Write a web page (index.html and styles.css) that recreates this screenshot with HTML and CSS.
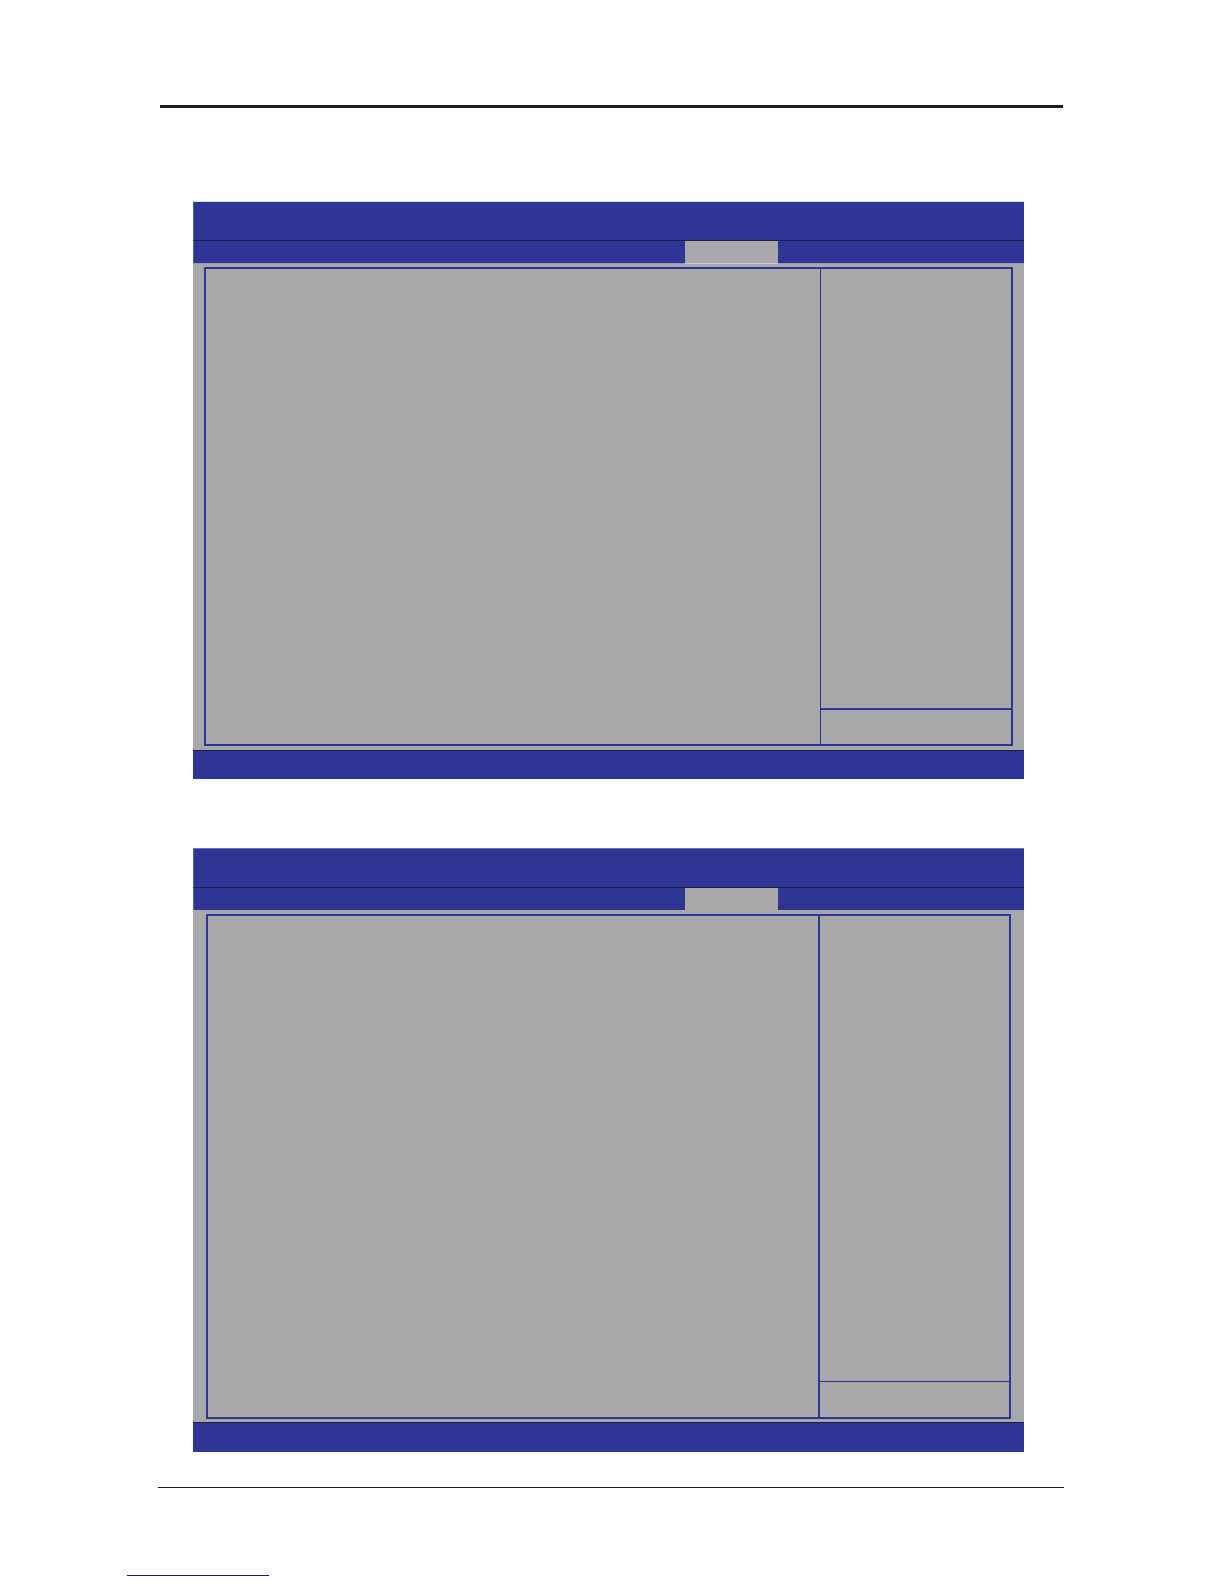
FILE: index.html
```html
<!DOCTYPE html>
<html lang="en">
<head>
    <meta charset="UTF-8">
    <meta name="viewport" content="width=device-width, initial-scale=1.0">
    <title>BIOS Setup</title>
    <link rel="stylesheet" href="styles.css">
</head>
<body>
    <div class="page">
        <header class="page-header"></header>

        <main>
            <section class="screen screen-first">
                <div class="title-bar"></div>
                <div class="menu-bar">
                    <div class="tab-active"></div>
                </div>
                <div class="content">
                    <div class="panel">
                        <div class="settings"></div>
                        <div class="side">
                            <div class="help"></div>
                            <div class="keys"></div>
                        </div>
                    </div>
                </div>
                <div class="bottom-bar"></div>
            </section>

            <section class="screen screen-second">
                <div class="title-bar"></div>
                <div class="menu-bar">
                    <div class="tab-active"></div>
                </div>
                <div class="content">
                    <div class="panel">
                        <div class="settings"></div>
                        <div class="side">
                            <div class="help"></div>
                            <div class="keys"></div>
                        </div>
                    </div>
                </div>
                <div class="bottom-bar"></div>
            </section>
        </main>

        <footer class="page-footer"></footer>
    </div>
    <div class="bottom-line"></div>
</body>
</html>
```
FILE: styles.css
```css
* {
    box-sizing: border-box;
}
body {
    margin: 0;
    background: #fff;
    font-family: "Liberation Sans", Arial, sans-serif;
}
.page {
    padding: 105px 160px 0 158px;
}
.page-header {
    margin: 0 1px 0 2px;
    border-top: 3px solid #1c1c1c;
}
main {
    display: flex;
    flex-direction: column;
    gap: 69px;
    margin: 93px 40px 0 35px;
}

/* setup screen */
.screen {
    background: #a8a8aa;
}
.title-bar {
    height: 40px;
    background: #2e3594;
    border-top: 1px solid #6e71c4;
    border-left: 1px solid #5a5fb0;
    border-bottom: 1px solid #1d1d3c;
}
.menu-bar {
    display: flex;
    height: 22px;
    padding-left: 491px;
    background: #2e3594;
    border-left: 1px solid #5a5fb0;
}
.tab-active {
    width: 93px;
    background: #a8a8aa;
}
.content {
    padding: 4px 13px 3px;
}
.panel {
    display: flex;
    border: 2px solid #2e3594;
}
.settings {
    flex: 1;
}
.side {
    display: flex;
    flex-direction: column;
    width: 191px;
    border-left: 2px solid #2e3594;
}
.help {
    min-height: 465px;
}
.keys {
    height: 36px;
    border-top: 1px solid #2e3594;
}
.bottom-bar {
    height: 30px;
    background: #2e3594;
    border-top: 1px solid #1d1d3c;
}

/* first screen has a wider panel and a thin divider */
.screen-first .title-bar {
    border-top-color: #d9d8f3;
}
.screen-first .menu-bar {
    height: 23px;
    border-bottom: 1px solid #9294c4;
}
.screen-first .tab-active {
    height: 23px;
    border-bottom: 1px solid #c9c9cd;
}
.screen-first .content {
    padding: 3px 11px 4px;
}
.screen-first .side {
    border-left-width: 1px;
}
.screen-first .help {
    min-height: 439px;
}
.screen-first .keys {
    border-top-width: 2px;
}
.screen-first .bottom-bar {
    height: 29px;
}

.page-footer {
    margin-top: 35px;
    border-top: 1px solid #1c1c1c;
}
.bottom-line {
    width: 142px;
    margin: 87px 0 0 127px;
    border-top: 1px solid #1a1a90;
}
```
